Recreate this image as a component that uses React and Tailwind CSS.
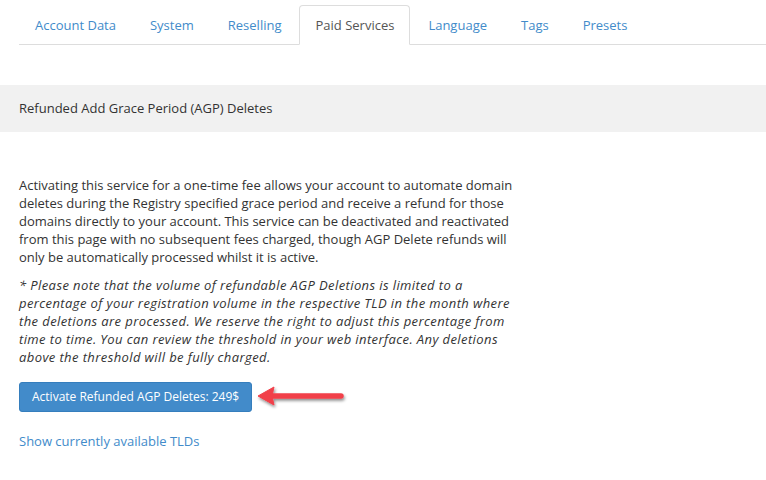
import { useState } from 'react';

const tabs = ['Account Data', 'System', 'Reselling', 'Paid Services', 'Language', 'Tags', 'Presets'];

function PointerArrow() {
  return (
    <svg width="94" height="28" viewBox="0 0 94 28" className="ml-[3px] block">
      <defs>
        <filter id="arrowShadow" x="-20%" y="-40%" width="140%" height="180%">
          <feDropShadow dx="1" dy="2" stdDeviation="1.6" floodColor="#000" floodOpacity="0.45" />
        </filter>
      </defs>
      <g filter="url(#arrowShadow)" fill="#f1404a" stroke="#f1404a">
        <line x1="17" y1="13" x2="86" y2="13" strokeWidth="5.5" strokeLinecap="round" />
        <path d="M3 13 L19 4 L17 13 L19 22 Z" strokeWidth="1" strokeLinejoin="round" />
      </g>
    </svg>
  );
}

export default function App() {
  const [active, setActive] = useState('Paid Services');

  return (
    <div className="min-h-screen bg-white text-[13px] text-[#333] font-['Open_Sans',_'Liberation_Sans',_sans-serif]">
      <ul className="ml-[19px] flex border-b border-[#ddd] pt-[5px]">
        {tabs.map((tab) => (
          <li key={tab} className="-mb-px mr-[2px]">
            <button
              onClick={() => setActive(tab)}
              className={
                tab === active
                  ? 'block rounded-t-[4px] border border-[#ddd] border-b-white bg-white px-[15px] py-[9px] leading-[20px] text-[#555]'
                  : 'block rounded-t-[4px] border border-transparent px-[15px] py-[9px] leading-[20px] text-[#428bca] hover:bg-[#eee]'
              }
            >
              {tab}
            </button>
          </li>
        ))}
      </ul>

      <div className="mt-[40px] flex h-[47px] items-center bg-[#f1f1f1] px-[19px]">
        Refunded Add Grace Period (AGP) Deletes
      </div>

      <div className="px-[19px] pt-[44px]">
        <div className="w-[500px] leading-[18px]">
          <p>
            Activating this service for a one-time fee allows your account to automate domain deletes during the
            Registry specified grace period and receive a refund for those domains directly to your account. This
            service can be deactivated and reactivated from this page with no subsequent fees charged, though AGP
            Delete refunds will only be automatically processed whilst it is active.
          </p>
          <p className="mt-[10px] whitespace-nowrap italic tracking-[0.4px]">
            * Please note that the volume of refundable AGP Deletions is limited to a<br />
            percentage of your registration volume in the respective TLD in the month where<br />
            the deletions are processed. We reserve the right to adjust this percentage from<br />
            time to time. You can review the threshold in your web interface. Any deletions<br />
            above the threshold will be fully charged.
          </p>
        </div>

        <div className="mt-[16px] flex items-center">
          <button className="h-[30px] rounded-[3px] border border-[#357ebd] bg-[#428bca] px-[12px] text-[12px] leading-[18px] text-white hover:bg-[#3276b1]">
            Activate Refunded AGP Deletes: 249$
          </button>
          <PointerArrow />
        </div>

        <a href="#" className="mt-[20px] block w-max leading-[18px] text-[#428bca] hover:underline">
          Show currently available TLDs
        </a>
      </div>
    </div>
  );
}
